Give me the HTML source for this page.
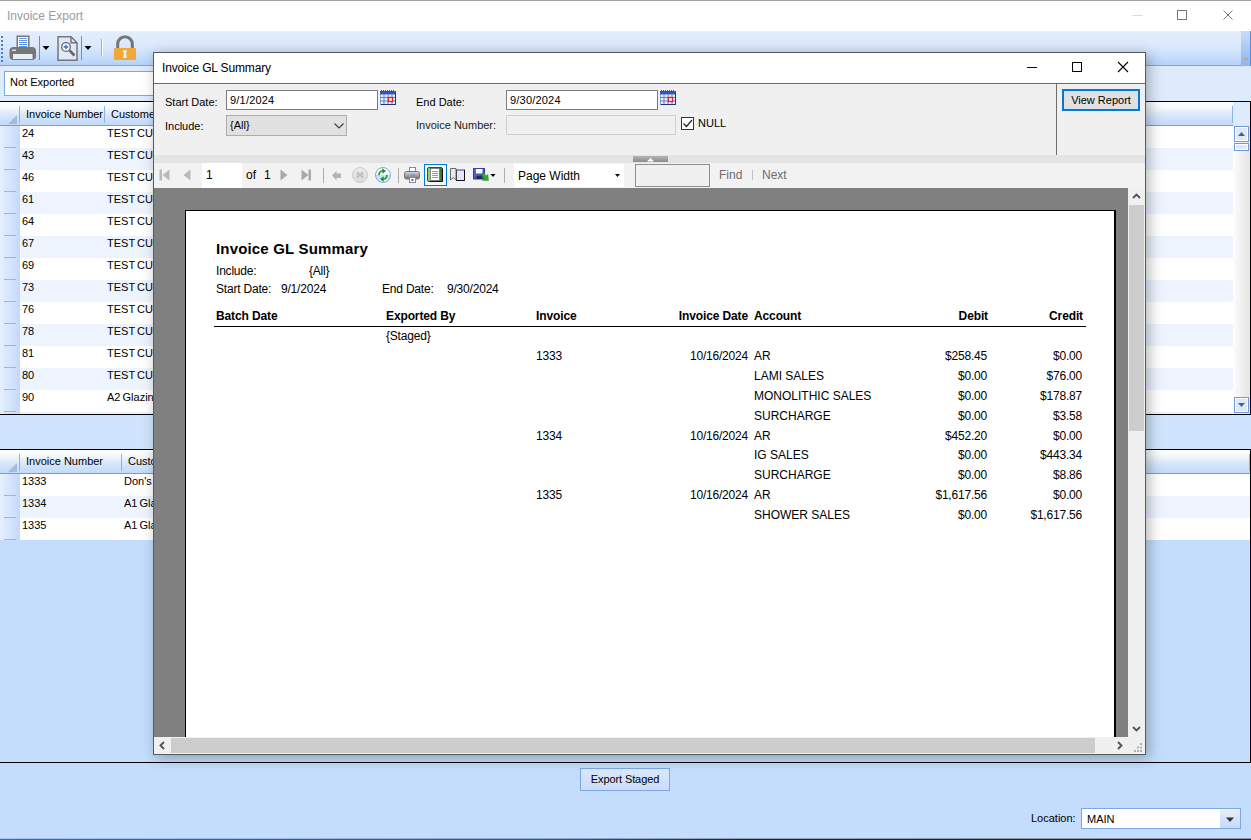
<!DOCTYPE html>
<html><head><meta charset="utf-8"><title>Invoice Export</title>
<style>
*{box-sizing:border-box}
html,body{margin:0;padding:0}
body{width:1251px;height:840px;position:relative;overflow:hidden;background:#c4ddfc;font-family:"Liberation Sans",sans-serif;font-size:11px;color:#000}
.a{position:absolute}
span,div,i,svg{position:absolute;display:block}
/* main window */
#mtitle{left:0;top:0;width:1251px;height:31px;background:#fff;border-top:1px solid #a0a0a0}
#mtitle .t{left:7px;top:8px;font-size:12px;color:#9a9a9a;white-space:nowrap}
#mtool{left:0;top:31px;width:1251px;height:35px;background:linear-gradient(#e2eefd 0%,#dae9fc 45%,#c8defb 75%,#b6d2f9 100%);border-bottom:1px solid #7ba7df}
#mfilter{left:0;top:66px;width:1251px;height:35px;background:#deebfd}
#combo1{left:4px;top:71px;width:700px;height:25px;background:#fff;border:1px solid #7da7e0}
#combo1 .t{left:5px;top:4px;font-size:11px;white-space:nowrap}
.grid{left:0;width:1251px;background:#c4ddfc;overflow:hidden}
.ghead{left:0;top:0;width:1250px;height:24px;background:linear-gradient(#ffffff 0%,#f4f8fe 25%,#d6e6fb 60%,#c2dafa 100%);border-bottom:1px solid #6f9fdc}
.ghead .h{top:6px;font-size:11px;white-space:nowrap}
.ghead .sep{top:4px;width:1px;height:17px;background:#8db2e6}
.gr{left:0;width:1250px;height:22px}
.gr .rh{left:0;top:0;width:20px;height:22px;background:linear-gradient(90deg,#e6effd,#cfe0fb 70%,#c3d8f9)}
.gr .rh i{left:4px;top:21px;width:12px;height:1px;background:#8db8f2}
.gr .c1{left:22px;top:1px;white-space:nowrap;font-size:11px}
.gr .c2{top:1px;white-space:nowrap;font-size:11px;word-spacing:-1px}
/* dialog */
#dlg{left:153px;top:52px;width:993px;height:703px;background:#f0f0f0;border:1px solid #5a5a5a;box-shadow:3px 3px 13px 0 rgba(0,0,0,.30);overflow:hidden}
#dlg .in{left:-154px;top:-53px;width:1251px;height:840px}
#dtitle{left:154px;top:53px;width:991px;height:30px;background:#fff}
#dtitle .t{left:8px;top:8px;font-size:12px;white-space:nowrap;letter-spacing:-0.15px}
.lbl{font-size:11px;white-space:nowrap;color:#000}
.tb{background:#fff;border:1px solid #7a7a7a}
.tb span{left:3px;top:3px;font-size:11px;white-space:nowrap;letter-spacing:.2px}
.rt{font-size:12px;white-space:nowrap;line-height:14px;letter-spacing:-0.2px}
.rb{font-size:12px;font-weight:bold;white-space:nowrap;line-height:14px;letter-spacing:-0.12px}
.r{text-align:right}
.tt{font-size:12px;white-space:nowrap}
</style></head>
<body>
<!-- ===== main window ===== -->
<div id="mtitle"><span class="t">Invoice Export</span>
<svg style="left:1130px;top:7px" width="110" height="16" viewBox="0 0 110 16"><path d="M2.5 7.5h10" stroke="#d9d9d9" fill="none"/><rect x="47.500" y="2.500" width="9" height="9" stroke="#777" fill="none"/><path d="M93.500 2.500l9 9M102.500 2.500l-9 9" stroke="#777" fill="none"/></svg>
</div>
<div id="mtool">
<svg style="left:0;top:3px" width="150" height="30" viewBox="0 0 150 30">
<g fill="#4a7ad0"><rect x="1" y="2" width="2" height="2"/><rect x="1" y="6" width="2" height="2"/><rect x="1" y="10" width="2" height="2"/><rect x="1" y="14" width="2" height="2"/><rect x="1" y="18" width="2" height="2"/><rect x="1" y="22" width="2" height="2"/><rect x="1" y="26" width="2" height="2"/></g>
<!-- printer -->
<rect x="17.250" y="2.250" width="11.500" height="12" fill="#fff" stroke="#777" stroke-width="1.500"/>
<path d="M19 4.500h8M19 6.500h8M19 8.500h8M19 10.500h8M19 12.500h8" stroke="#5b95e6" stroke-width="1"/>
<rect x="9.500" y="13" width="26.500" height="13" rx="4" fill="#777"/>
<rect x="13" y="20" width="19.500" height="5" fill="#e9f0fb"/>
<rect x="12" y="15.500" width="4" height="1.500" fill="#ddd"/>
<!-- sep/arrow -->
<rect x="39" y="2" width="1" height="24" fill="#8a8a8a"/>
<path d="M42.500 12h7l-3.500 4z" fill="#000"/>
<!-- preview -->
<path d="M58 2.750h13l6 6v17.500h-19z" fill="#dfe8f6" stroke="#777" stroke-width="1.500"/>
<path d="M71 2.750v6h6" fill="none" stroke="#777" stroke-width="1.500"/>
<circle cx="66" cy="13" r="4.300" fill="#fff" stroke="#666" stroke-width="1.300"/>
<path d="M66 10.700v4.600M63.700 13h4.600" stroke="#2f6fd8" stroke-width="1.400"/>
<path d="M69.500 16.500l5 5" stroke="#666" stroke-width="2.600"/>
<rect x="81" y="2" width="1" height="24" fill="#8a8a8a"/>
<path d="M84.500 12h7l-3.500 4z" fill="#000"/>
<rect x="101" y="5" width="1" height="17" fill="#8db6f0"/><rect x="102" y="5" width="1" height="17" fill="#fafcff"/>
<!-- lock -->
<path d="M117.700 14.500v-4.500a7.300 7.300 0 0 1 14.600 0v4.500" fill="none" stroke="#757575" stroke-width="3"/>
<rect x="114" y="14" width="22" height="12" rx="1.200" fill="#f0a936"/>
<path d="M123 16.300h4l-.9 3.700 .9 4h-4l.9-4z" fill="#e3ecfb"/>
</svg>
<div style="left:1241px;top:0;width:10px;height:35px;background:linear-gradient(#c8dcfb,#8db5f0);border-right:1px solid #5b8dd6"></div><svg style="left:1243px;top:27px" width="6" height="4"><path d="M0 0h5l-2.500 3z" fill="#c9a37c"/></svg>
</div>
<div id="mfilter"></div>
<div id="combo1"><span class="t">Not Exported</span></div>

<div class="grid" style="top:101px;height:314px;border-top:1px solid #000;border-bottom:1px solid #000;border-right:1px solid #000">
<div class="ghead"><span class="sep" style="left:19px"></span><svg style="left:8px;top:13px" width="9" height="9"><path d="M9 0v9h-9z" fill="#a9bbd9"/></svg><span class="h" style="left:26px">Invoice Number</span><span class="sep" style="left:104px"></span><span class="h" style="left:111px">Customer</span><span class="sep" style="left:1232px"></span></div>
<div style="left:0;top:-102px;width:1251px;height:500px">
<div class="gr" style="top:126px;background:#ffffff"><span class="rh"><i></i></span><span class="c1">24</span><span class="c2" style="left:107px">TEST CUS</span></div>
<div class="gr" style="top:148px;background:#edf4fe"><span class="rh"><i></i></span><span class="c1">43</span><span class="c2" style="left:107px">TEST CUS</span></div>
<div class="gr" style="top:170px;background:#ffffff"><span class="rh"><i></i></span><span class="c1">46</span><span class="c2" style="left:107px">TEST CUS</span></div>
<div class="gr" style="top:192px;background:#edf4fe"><span class="rh"><i></i></span><span class="c1">61</span><span class="c2" style="left:107px">TEST CUS</span></div>
<div class="gr" style="top:214px;background:#ffffff"><span class="rh"><i></i></span><span class="c1">64</span><span class="c2" style="left:107px">TEST CUS</span></div>
<div class="gr" style="top:236px;background:#edf4fe"><span class="rh"><i></i></span><span class="c1">67</span><span class="c2" style="left:107px">TEST CUS</span></div>
<div class="gr" style="top:258px;background:#ffffff"><span class="rh"><i></i></span><span class="c1">69</span><span class="c2" style="left:107px">TEST CUS</span></div>
<div class="gr" style="top:280px;background:#edf4fe"><span class="rh"><i></i></span><span class="c1">73</span><span class="c2" style="left:107px">TEST CUS</span></div>
<div class="gr" style="top:302px;background:#ffffff"><span class="rh"><i></i></span><span class="c1">76</span><span class="c2" style="left:107px">TEST CUS</span></div>
<div class="gr" style="top:324px;background:#edf4fe"><span class="rh"><i></i></span><span class="c1">78</span><span class="c2" style="left:107px">TEST CUS</span></div>
<div class="gr" style="top:346px;background:#ffffff"><span class="rh"><i></i></span><span class="c1">81</span><span class="c2" style="left:107px">TEST CUS</span></div>
<div class="gr" style="top:368px;background:#edf4fe"><span class="rh"><i></i></span><span class="c1">80</span><span class="c2" style="left:107px">TEST CUS</span></div>
<div class="gr" style="top:390px;background:#ffffff"><span class="rh"><i></i></span><span class="c1">90</span><span class="c2" style="left:107px">A2 Glazing</span></div>
<div class="gr" style="top:412px;background:#edf4fe"><span class="rh"><i></i></span><span class="c1"></span><span class="c2" style="left:107px"></span></div>
</div>
<div style="left:1233px;top:0;width:17px;height:24px;background:#deebfd"></div>
<div style="left:1233px;top:24px;width:17px;height:288px;background:linear-gradient(90deg,#fdfdfd,#e4e4e4)"></div>
<div style="left:1234px;top:24px;width:15px;height:16px;background:#dde9fb;border:1px solid #6d9ad8;box-shadow:inset 0 0 0 1px #fff"></div>
<svg style="left:1237px;top:29px" width="9" height="6"><path d="M1 5h7l-3.500-4z" fill="#4a6184"/></svg>
<div style="left:1234px;top:41px;width:15px;height:8px;background:#dde9fb;border:1px solid #6d9ad8;box-shadow:inset 0 0 0 1px #fff"></div>
<div style="left:1234px;top:295px;width:15px;height:16px;background:#dde9fb;border:1px solid #6d9ad8;box-shadow:inset 0 0 0 1px #fff"></div>
<svg style="left:1237px;top:300px" width="9" height="6"><path d="M1 1h7l-3.500 4z" fill="#4a6184"/></svg>
</div>

<div style="left:0;top:415px;width:1251px;height:34px;background:#d0e5fd"></div>

<div class="grid" style="top:449px;height:313px;border-top:1px solid #000;border-right:1px solid #000">
<div class="ghead"><span class="sep" style="left:19px"></span><svg style="left:8px;top:13px" width="9" height="9"><path d="M9 0v9h-9z" fill="#a9bbd9"/></svg><span class="h" style="left:26px;top:5px">Invoice Number</span><span class="sep" style="left:121px"></span><span class="h" style="left:128px;top:5px">Customer</span><span class="sep" style="left:1249px"></span></div>
<div style="left:0;top:-450px;width:1251px;height:600px">
<div class="gr" style="top:474px;background:#ffffff"><span class="rh"><i></i></span><span class="c1">1333</span><span class="c2" style="left:124px">Don's</span></div>
<div class="gr" style="top:496px;background:#edf4fe"><span class="rh"><i></i></span><span class="c1">1334</span><span class="c2" style="left:124px">A1 Glass</span></div>
<div class="gr" style="top:518px;background:#ffffff"><span class="rh"><i></i></span><span class="c1">1335</span><span class="c2" style="left:124px">A1 Glass</span></div>
</div>
</div>

<div style="left:0;top:762px;width:1251px;height:1px;background:#000"></div>
<div style="left:580px;top:768px;width:90px;height:23px;border:1px solid #7da7e0;background:linear-gradient(#dbe8fb,#c9dcf9)"><span style="left:0;top:4px;width:88px;text-align:center;font-size:11px;letter-spacing:-0.1px">Export Staged</span></div>
<span style="left:1031px;top:812px;font-size:11px;white-space:nowrap">Location:</span>
<div style="left:1081px;top:808px;width:160px;height:21px;border:1px solid #7da7e0;background:#fff"><span style="left:5px;top:4px;font-size:11px">MAIN</span>
<div style="left:138px;top:0;width:20px;height:19px;background:linear-gradient(#e8f0fc,#c5d9f7)"></div>
<svg style="left:144px;top:8px" width="8" height="5"><path d="M0 .5h8l-4 4.500z" fill="#333"/></svg></div>
<div style="left:0;top:838px;width:1251px;height:1px;background:linear-gradient(90deg,#a9c4e8,#8fa6c4 50%,#8a95a5)"></div><div style="left:0;top:839px;width:1251px;height:1px;background:linear-gradient(90deg,#3f689c 0%,#34567f 45%,#1c2430 60%,#222 100%)"></div>

<!-- ===== dialog ===== -->
<div id="dlg"><div class="in">
<div id="dtitle"><span class="t">Invoice GL Summary</span>
<svg style="left:870px;top:7px" width="115" height="16" viewBox="0 0 115 16"><path d="M3 7.500h10" stroke="#000" fill="none"/><rect x="48.500" y="2.500" width="9" height="9" stroke="#000" fill="none"/><path d="M94 2l10 10M104 2l-10 10" stroke="#000" stroke-width="1.100" fill="none"/></svg>
</div>
<div style="left:154px;top:83px;width:991px;height:1px;background:#6a6a6a"></div>
<!-- parameter area -->
<span class="lbl" style="left:165px;top:96px">Start Date:</span>
<div class="tb" style="left:226px;top:90px;width:152px;height:20px"><span>9/1/2024</span></div>
<span class="lbl" style="left:165px;top:120px">Include:</span>
<div style="left:226px;top:115px;width:121px;height:21px;background:#e1e1e1;border:1px solid #adadad"><span style="left:3px;top:3px;font-size:11px">{All}</span><svg style="left:107px;top:7px" width="10" height="6"><path d="M.5 .5l4.500 4.500l4.500-4.500" stroke="#404040" fill="none" stroke-width="1.200"/></svg></div>
<span class="lbl" style="left:416px;top:96px">End Date:</span>
<div class="tb" style="left:506px;top:90px;width:152px;height:20px"><span>9/30/2024</span></div>
<span class="lbl" style="left:416px;top:119px;color:#222">Invoice Number:</span>
<div style="left:506px;top:115px;width:170px;height:20px;background:#f0f0f0;border:1px solid #cfcfcf"></div>
<div style="left:681px;top:117px;width:13px;height:13px;background:#fff;border:1px solid #333"><svg style="left:0;top:0" width="11" height="11"><path d="M1.500 5.500l3 3l5.500-6.500" stroke="#222" fill="none" stroke-width="1.200"/></svg></div>
<span class="lbl" style="left:698px;top:117px">NULL</span>
<svg class="cal" style="left:380px;top:90px" width="16" height="15" viewBox="0 0 16 15"><rect x="0" y="1" width="16" height="3" fill="#2d55b5"/><rect x="0" y="4" width="16" height="11" fill="#e8eefb" stroke="#3b64c4" stroke-width="1"/><path d="M4 4v11M8 4v11M12 4v11M0 7.500h16M0 11h16" stroke="#5c82d6" stroke-width="1"/><rect x="8.500" y="7.500" width="4" height="4" fill="#fff" stroke="#e02020" stroke-width="1.300"/><path d="M1 0.500h14" stroke="#555" stroke-dasharray="1 1"/><path d="M15.500 3v11.500h-14.500" stroke="#1f3578" fill="none"/></svg>
<svg class="cal" style="left:660px;top:90px" width="16" height="15" viewBox="0 0 16 15"><rect x="0" y="1" width="16" height="3" fill="#2d55b5"/><rect x="0" y="4" width="16" height="11" fill="#e8eefb" stroke="#3b64c4" stroke-width="1"/><path d="M4 4v11M8 4v11M12 4v11M0 7.500h16M0 11h16" stroke="#5c82d6" stroke-width="1"/><rect x="8.500" y="7.500" width="4" height="4" fill="#fff" stroke="#e02020" stroke-width="1.300"/><path d="M1 0.500h14" stroke="#555" stroke-dasharray="1 1"/><path d="M15.500 3v11.500h-14.500" stroke="#1f3578" fill="none"/></svg>
<div style="left:1056px;top:83px;width:1px;height:72px;background:#6e6e6e"></div>
<div style="left:1062px;top:89px;width:78px;height:22px;background:#e1e1e1;border:2px solid #0078d7"><span style="left:0;top:3px;width:74px;text-align:center;font-size:11px;white-space:nowrap">View Report</span></div>
<!-- splitter -->
<div style="left:154px;top:155px;width:991px;height:8px;background:#e4e4e4"></div>
<div style="left:633px;top:156px;width:35px;height:6px;background:linear-gradient(#b4b4b4,#8c8c8c)"><svg style="left:14px;top:2px" width="7" height="4"><path d="M0 3.500h7l-3.500-3.500z" fill="#fff"/></svg></div>
<!-- viewer toolbar -->
<div id="vtool" style="left:154px;top:163px;width:991px;height:25px;background:#f2f2f2">
<svg style="left:0;top:0" width="500" height="25" viewBox="154 163 500 25">
<g fill="#b9b9b9"><rect x="159.500" y="169.500" width="2.500" height="11"/><path d="M169.500 169.500v11l-7-5.500z"/><path d="M190.500 169.500v11l-7-5.500z"/></g>
<g fill="#a9a9a9"><path d="M280.500 169.500v11l7-5.500z"/><path d="M301.500 169.500v11l7-5.500z"/><rect x="308.500" y="169.500" width="2.500" height="11"/></g>
<rect x="323" y="168" width="1" height="15" fill="#adadad"/>
<path d="M332 175.500l4.500-4.500v2.500h4.500v4.500h-4.500v2.500z" fill="#b4b4b4"/>
<linearGradient id="sg" x1="0" y1="0" x2="0" y2="1"><stop offset="0" stop-color="#ececec"/><stop offset="1" stop-color="#dadada"/></linearGradient>
<linearGradient id="rg" x1="0" y1="0" x2="0" y2="1"><stop offset="0" stop-color="#ffffff"/><stop offset=".5" stop-color="#f2f7fe"/><stop offset=".52" stop-color="#c9ddf9"/><stop offset="1" stop-color="#dbe8fb"/></linearGradient>
<circle cx="360" cy="175" r="7.500" fill="url(#sg)" stroke="#cacaca"/>
<path d="M356.700 172.500l6.600 5M363.300 172.500l-6.600 5" stroke="#c2c2c2" stroke-width="2.200"/>
<circle cx="383" cy="175" r="7.500" fill="url(#rg)" stroke="#7fa8e6" stroke-width="1"/>
<path d="M379 175.200q0-4.200 3.800-4.200" fill="none" stroke="#2aa02a" stroke-width="1.700"/>
<path d="M382.300 168.300l3.700 2.700l-3.700 2.700z" fill="#1f901f"/>
<path d="M387 174.800q0 4.200-3.800 4.200" fill="none" stroke="#2aa02a" stroke-width="1.700"/>
<path d="M383.700 176.300l-3.700 2.700l3.700 2.700z" fill="#1f901f"/>
<rect x="398" y="168" width="1" height="15" fill="#adadad"/>
<!-- printer -->
<defs><linearGradient id="pg" x1="0" y1="0" x2="0" y2="1"><stop offset="0" stop-color="#dcdcdc"/><stop offset="1" stop-color="#6e6e6e"/></linearGradient>
<linearGradient id="gg" x1="0" y1="0" x2="1" y2="0"><stop offset="0" stop-color="#9ccf97"/><stop offset=".7" stop-color="#5c9a58"/><stop offset="1" stop-color="#2f5f2f"/></linearGradient>
<linearGradient id="fg" x1="0" y1="0" x2="1" y2="1"><stop offset="0" stop-color="#6a6fe0"/><stop offset="1" stop-color="#30349a"/></linearGradient></defs>
<rect x="409.500" y="167.500" width="6" height="5" fill="#fff" stroke="#8a8a8a"/>
<rect x="404.500" y="171.500" width="15" height="7.500" rx="2" fill="url(#pg)" stroke="#777"/>
<rect x="409.500" y="177.500" width="6" height="5" fill="#fff" stroke="#8a8a8a"/>
<rect x="411.500" y="179" width="2" height="2" fill="#3a7ae0"/>
<rect x="411" y="174.500" width="4" height="1.300" fill="#4aa0ff"/>
<!-- print layout selected -->
<rect x="424.500" y="164.500" width="22" height="21" fill="#f5f7fa" stroke="#0078d7"/>
<rect x="427.500" y="167.500" width="15" height="14" rx="1.500" fill="url(#gg)" stroke="#2d552d"/>
<path d="M442.500 169v12.500h-13" stroke="#111" fill="none" stroke-width="1"/>
<rect x="430.500" y="168.500" width="9" height="12" fill="#fff" stroke="#555" stroke-width=".6"/>
<path d="M432 171.500h6M432 173.500h6M432 175.500h6M432 177.500h6" stroke="#7f8fc0" stroke-width=".9"/>
<!-- page setup -->
<path d="M450.500 168.500h5.500v11.500l-2.750-2.500l-2.750 2.500z" fill="#e9e9e9" stroke="#6a6a6a"/>
<rect x="456.500" y="170" width="8" height="10.500" fill="#dfe7f8" stroke="#444"/>
<path d="M464.500 170v10.500h-8" stroke="#111" fill="none"/>
<!-- export -->
<rect x="473.500" y="168.500" width="11" height="10.500" fill="url(#fg)" stroke="#3a3fa8"/>
<rect x="476" y="169" width="6.500" height="4.500" fill="#fff"/>
<rect x="476.500" y="176" width="5" height="3" fill="#22265a"/>
<path d="M481.500 174.500l2.200-1.700l2.300 3.200l1.800-1.500l.7 6l-6.200-.2l1.800-1.500z" fill="#25b025" stroke="#1a8a1a" stroke-width=".5"/>
<path d="M490.500 174h5l-2.500 3z" fill="#000"/>
<rect x="504" y="168" width="1" height="15" fill="#adadad"/>
<rect x="514" y="164" width="110" height="23" fill="#fff"/>
<path d="M615 174h5l-2.500 3z" fill="#000"/>
</svg>
<div style="left:48px;top:0;width:40px;height:25px;background:#fff"></div>
<span class="tt" style="left:52px;top:5px">1</span>
<span class="tt" style="left:92px;top:5px">of</span>
<span class="tt" style="left:110px;top:5px">1</span>
<span class="tt" style="left:364px;top:6px">Page Width</span>
<div style="left:481px;top:1px;width:75px;height:23px;border:1px solid #8e8e8e;background:#f0f0f0"></div>
<span class="tt" style="left:565px;top:5px;color:#6d6d6d">Find</span>
<div style="left:598px;top:7px;width:1px;height:10px;background:#c0c0c0"></div>
<span class="tt" style="left:608px;top:5px;color:#6d6d6d">Next</span>
</div>
<!-- gray viewer area -->
<div style="left:154px;top:188px;width:974px;height:549px;background:#808080"></div>
<div style="left:185px;top:210px;width:931px;height:540px;background:#fff;border-left:1px solid #000;border-top:1px solid #000;border-right:2px solid #000"></div>
<div style="left:154px;top:737px;width:991px;height:17px;background:#f0f0f0"></div>
<div style="left:1128px;top:188px;width:17px;height:549px;background:#f0f0f0"></div>
<div style="left:1129px;top:205px;width:15px;height:226px;background:#cdcdcd"></div>
<div style="left:171px;top:738px;width:924px;height:15px;background:#cdcdcd"></div>
<svg style="left:1128px;top:188px" width="17" height="17"><path d="M5 10l3.500-3.500l3.500 3.500" stroke="#555" stroke-width="1.900" fill="none"/></svg>
<svg style="left:1128px;top:720px" width="17" height="17"><path d="M5 7l3.500 3.500l3.500-3.500" stroke="#555" stroke-width="1.900" fill="none"/></svg>
<svg style="left:154px;top:737px" width="17" height="17"><path d="M10 5l-3.500 3.500l3.500 3.500" stroke="#555" stroke-width="1.900" fill="none"/></svg>
<svg style="left:1111px;top:737px" width="17" height="17"><path d="M7 5l3.500 3.500l-3.500 3.500" stroke="#555" stroke-width="1.900" fill="none"/></svg>
<svg style="left:1132px;top:742px" width="12" height="12"><g fill="#b0b0b0"><rect x="8" y="1" width="2" height="2"/><rect x="5" y="4.500" width="2" height="2"/><rect x="8" y="4.500" width="2" height="2"/><rect x="2" y="8" width="2" height="2"/><rect x="5" y="8" width="2" height="2"/><rect x="8" y="8" width="2" height="2"/></g></svg>
<!-- report -->
<span style="left:216px;top:240px;font-size:15px;font-weight:bold;white-space:nowrap;letter-spacing:0.17px">Invoice GL Summary</span>
<span class="rt" style="left:216px;top:264px">Include:</span>
<span class="rt" style="left:309px;top:264px">{All}</span>
<span class="rt" style="left:216px;top:282px">Start Date:</span>
<span class="rt" style="left:281px;top:282px">9/1/2024</span>
<span class="rt" style="left:382px;top:282px">End Date:</span>
<span class="rt" style="left:447px;top:282px">9/30/2024</span>
<span class="rb" style="left:216px;top:309px">Batch Date</span>
<span class="rb" style="left:386px;top:309px">Exported By</span>
<span class="rb" style="left:536px;top:309px">Invoice</span>
<span class="rb r" style="right:503px;top:309px">Invoice Date</span>
<span class="rb" style="left:754px;top:309px">Account</span>
<span class="rb r" style="right:263px;top:309px">Debit</span>
<span class="rb r" style="right:168px;top:309px">Credit</span>
<div style="left:214px;top:326px;width:872px;height:1px;background:#000"></div>
<span class="rt" style="left:386px;top:329px">{Staged}</span>
<span class="rt" style="left:536px;top:349px">1333</span>
<span class="rt r" style="right:503px;top:349px">10/16/2024</span>
<span class="rt" style="left:754px;top:349px;letter-spacing:0">AR</span>
<span class="rt r" style="right:264px;top:349px">$258.45</span>
<span class="rt r" style="right:169px;top:349px">$0.00</span>
<span class="rt" style="left:754px;top:369px;letter-spacing:0">LAMI SALES</span>
<span class="rt r" style="right:264px;top:369px">$0.00</span>
<span class="rt r" style="right:169px;top:369px">$76.00</span>
<span class="rt" style="left:754px;top:389px;letter-spacing:0">MONOLITHIC SALES</span>
<span class="rt r" style="right:264px;top:389px">$0.00</span>
<span class="rt r" style="right:169px;top:389px">$178.87</span>
<span class="rt" style="left:754px;top:409px;letter-spacing:0">SURCHARGE</span>
<span class="rt r" style="right:264px;top:409px">$0.00</span>
<span class="rt r" style="right:169px;top:409px">$3.58</span>
<span class="rt" style="left:536px;top:429px">1334</span>
<span class="rt r" style="right:503px;top:429px">10/16/2024</span>
<span class="rt" style="left:754px;top:429px;letter-spacing:0">AR</span>
<span class="rt r" style="right:264px;top:429px">$452.20</span>
<span class="rt r" style="right:169px;top:429px">$0.00</span>
<span class="rt" style="left:754px;top:448px;letter-spacing:0">IG SALES</span>
<span class="rt r" style="right:264px;top:448px">$0.00</span>
<span class="rt r" style="right:169px;top:448px">$443.34</span>
<span class="rt" style="left:754px;top:468px;letter-spacing:0">SURCHARGE</span>
<span class="rt r" style="right:264px;top:468px">$0.00</span>
<span class="rt r" style="right:169px;top:468px">$8.86</span>
<span class="rt" style="left:536px;top:488px">1335</span>
<span class="rt r" style="right:503px;top:488px">10/16/2024</span>
<span class="rt" style="left:754px;top:488px;letter-spacing:0">AR</span>
<span class="rt r" style="right:264px;top:488px">$1,617.56</span>
<span class="rt r" style="right:169px;top:488px">$0.00</span>
<span class="rt" style="left:754px;top:508px;letter-spacing:0">SHOWER SALES</span>
<span class="rt r" style="right:264px;top:508px">$0.00</span>
<span class="rt r" style="right:169px;top:508px">$1,617.56</span>
</div></div>
</body></html>
